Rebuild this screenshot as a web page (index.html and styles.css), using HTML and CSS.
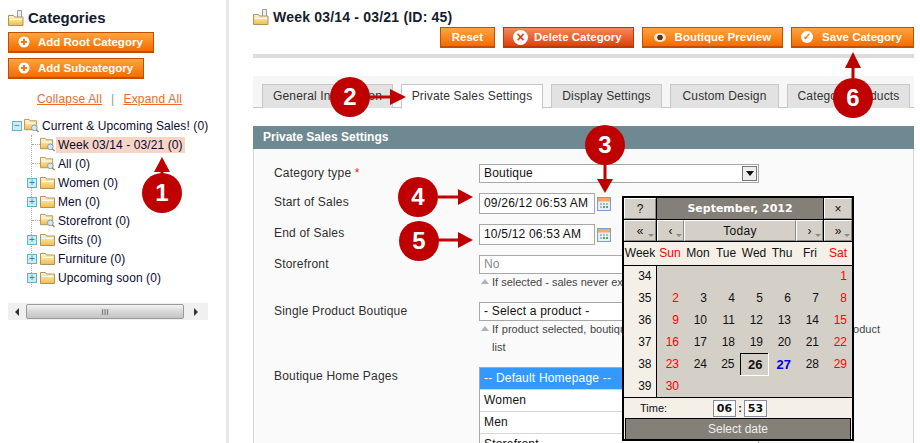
FILE: index.html
```html
<!DOCTYPE html>
<html lang="en">
<head>
  <meta charset="UTF-8" />
  <title>Manage Categories</title>
  <link rel="stylesheet" href="styles.css">
</head>
<body>
  <svg class="defs" width="0" height="0">
    <defs>
      <linearGradient id="fold" x1="0" y1="0" x2="0" y2="1">
        <stop offset="0" stop-color="#fff8d8"/>
        <stop offset="1" stop-color="#f0bd45"/>
      </linearGradient>
    </defs>
    <symbol id="folder" viewBox="0 0 15 15">
      <path d="M0.5 2.5h5l1 1.5h8v9.5h-14z" fill="url(#fold)" stroke="#b0935a"/>
      <path d="M2 6h11v1H2z" fill="#fff"/>
    </symbol>
    <symbol id="folder-search" viewBox="0 0 16 16">
      <path d="M0.5 1.5h5l1 1.5h7v9.5h-13z" fill="url(#fold)" stroke="#b0935a"/>
      <path d="M2 5h10v1H2z" fill="#fff"/>
      <circle cx="11" cy="10.5" r="3" fill="#d6e8f7" stroke="#7b9cba"/>
      <path d="M13 12.5l2.5 2.5" stroke="#b5803a" stroke-width="1.5"/>
    </symbol>
    <symbol id="head-folder" viewBox="0 0 16 16">
      <path d="M9.5 0.5h4v7h-4z" fill="#eee" stroke="#9a9a9a"/>
      <path d="M0.5 5.5h5l1 1.5h8.5v8.5H0.5z" fill="url(#fold)" stroke="#b0935a"/>
      <path d="M2 9h12v1H2z" fill="#fff"/>
    </symbol>
    <symbol id="cal" viewBox="0 0 14 14">
      <rect x="0.5" y="0.5" width="13" height="13" fill="#e6eef8" stroke="#7d9fc9"/>
      <rect x="1" y="1" width="12" height="3.5" fill="#f7a860"/>
      <path d="M3 6h2v2H3zM6 6h2v2H6zM9 6h2v2H9zM3 9h2v2H3z" fill="#a9bcd4"/>
      <path d="M6 9h2v2H6zM9 9h2v2H9z" fill="#5da84e"/>
    </symbol>
    <symbol id="add" viewBox="0 0 12 12">
      <circle cx="6" cy="6" r="5.5" fill="#fff"/>
      <path d="M6 3v6M3 6h6" stroke="#f07a10" stroke-width="2"/>
    </symbol>
  </svg>

  <div class="page">
    <aside class="side">
      <h3 class="side-title"><svg class="head-icon"><use href="#head-folder"/></svg>Categories</h3>
      <button class="btn btn-side"><svg class="btn-icon"><use href="#add"/></svg>Add Root Category</button>
      <button class="btn btn-side"><svg class="btn-icon"><use href="#add"/></svg>Add Subcategory</button>
      <p class="tree-links"><a>Collapse All</a><span class="sep">|</span><a>Expand All</a></p>

      <div class="tree">
        <div class="tree-row tree-root">
          <span class="toggle">&minus;</span>
          <svg class="folder"><use href="#folder-search"/></svg>
          <span>Current &amp; Upcoming Sales! (0)</span>
        </div>
        <ul class="tree-kids">
          <li class="tree-row leaf"><svg class="folder"><use href="#folder-search"/></svg><span class="current">Week 03/14 - 03/21 (0)</span></li>
          <li class="tree-row leaf"><svg class="folder"><use href="#folder-search"/></svg><span>All (0)</span></li>
          <li class="tree-row"><span class="toggle">+</span><svg class="folder"><use href="#folder"/></svg><span>Women (0)</span></li>
          <li class="tree-row"><span class="toggle">+</span><svg class="folder"><use href="#folder"/></svg><span>Men (0)</span></li>
          <li class="tree-row leaf"><svg class="folder"><use href="#folder-search"/></svg><span>Storefront (0)</span></li>
          <li class="tree-row"><span class="toggle">+</span><svg class="folder"><use href="#folder"/></svg><span>Gifts (0)</span></li>
          <li class="tree-row"><span class="toggle">+</span><svg class="folder"><use href="#folder"/></svg><span>Furniture (0)</span></li>
          <li class="tree-row"><span class="toggle">+</span><svg class="folder"><use href="#folder"/></svg><span>Upcoming soon (0)</span></li>
        </ul>
      </div>

      <div class="hscroll">
        <span class="arrow-left"></span>
        <span class="thumb">III</span>
        <span class="arrow-right"></span>
      </div>
    </aside>

    <main class="main">
      <h3 class="main-title"><svg class="head-icon"><use href="#head-folder"/></svg>Week 03/14 - 03/21 (ID: 45)</h3>
      <div class="actions">
        <button class="btn">Reset</button>
        <button class="btn btn-delete"><span class="ic-delete">&times;</span>Delete Category</button>
        <button class="btn"><span class="ic-eye"></span>Boutique Preview</button>
        <button class="btn btn-save"><span class="ic-check">&#10003;</span>Save Category</button>
      </div>
      <div class="rule"></div>

      <ul class="tabs">
        <li class="tab tab-general">General Information</li>
        <li class="tab tab-active">Private Sales Settings</li>
        <li class="tab tab-display">Display Settings</li>
        <li class="tab tab-design">Custom Design</li>
        <li class="tab tab-products">Category Products</li>
      </ul>

      <section class="panel">
        <h4 class="panel-head">Private Sales Settings</h4>
        <div class="form">
          <div class="row row-type">
            <label>Category type <em>*</em></label>
            <div class="field select">Boutique<span class="select-arrow"></span></div>
          </div>
          <div class="row row-date">
            <label>Start of Sales</label>
            <div class="date-wrap"><div class="field date">09/26/12 06:53 AM</div><svg class="cal-icon"><use href="#cal"/></svg></div>
          </div>
          <div class="row row-date">
            <label>End of Sales</label>
            <div class="date-wrap"><div class="field date">10/5/12 06:53 AM</div><svg class="cal-icon"><use href="#cal"/></svg></div>
          </div>
          <div class="row row-store">
            <label>Storefront</label>
            <div>
              <div class="field disabled">No</div>
              <p class="note">If selected - sales never expire</p>
            </div>
          </div>
          <div class="row row-single">
            <label>Single Product Boutique</label>
            <div>
              <div class="field select">- Select a product -</div>
              <p class="note note-wrap">If product selected, boutique will be redirected straight on to the single product list</p>
            </div>
          </div>
          <div class="row">
            <label>Boutique Home Pages</label>
            <ul class="listbox">
              <li class="picked">-- Default Homepage --</li>
              <li>Women</li>
              <li>Men</li>
              <li>Storefront</li>
            </ul>
          </div>
        </div>
      </section>
    </main>
  </div>

  <div class="calendar">
    <div class="cal-top">
      <span class="cal-btn cal-small">?</span>
      <span class="cal-month">September, 2012</span>
      <span class="cal-btn cal-close">&times;</span>
    </div>
    <div class="cal-nav">
      <span class="cal-btn cal-small drop">&laquo;</span>
      <span class="cal-btn cal-step drop">&lsaquo;</span>
      <span class="cal-btn cal-today">Today</span>
      <span class="cal-btn cal-step drop">&rsaquo;</span>
      <span class="cal-btn cal-close drop">&raquo;</span>
    </div>
    <table class="cal-days">
      <thead>
        <tr><th class="wk">Week</th><th class="we">Sun</th><th>Mon</th><th>Tue</th><th>Wed</th><th>Thu</th><th>Fri</th><th class="we">Sat</th></tr>
      </thead>
      <tbody>
        <tr><td class="wk">34</td><td></td><td></td><td></td><td></td><td></td><td></td><td class="we">1</td></tr>
        <tr><td class="wk">35</td><td class="we">2</td><td>3</td><td>4</td><td>5</td><td>6</td><td>7</td><td class="we">8</td></tr>
        <tr><td class="wk">36</td><td class="we">9</td><td>10</td><td>11</td><td>12</td><td>13</td><td>14</td><td class="we">15</td></tr>
        <tr><td class="wk">37</td><td class="we">16</td><td>17</td><td>18</td><td>19</td><td>20</td><td>21</td><td class="we">22</td></tr>
        <tr><td class="wk">38</td><td class="we">23</td><td>24</td><td>25</td><td class="sel">26</td><td class="today">27</td><td>28</td><td class="we">29</td></tr>
        <tr><td class="wk">39</td><td class="we">30</td><td></td><td></td><td></td><td></td><td></td><td></td></tr>
      </tbody>
    </table>
    <div class="cal-time">
      <span class="time-label">Time:</span>
      <span class="time-box">06</span><b>:</b><span class="time-box">53</span>
    </div>
    <div class="cal-foot">Select date</div>
  </div>

  <!-- callouts -->
  <svg class="arrows" width="920" height="443">
    <g fill="#bf0000" stroke="#bf0000" stroke-width="3">
      <path d="M162 175V165M370 97H392M605 165V182M438 197H460M438 240H460M853 78V66" fill="none"/>
      <g stroke="none">
        <path d="M162 157l8 15h-16z"/>
        <path d="M406 97l-16 8v-16z"/>
        <path d="M605 193l-8-14h16z"/>
        <path d="M473 197l-15 8v-16z"/>
        <path d="M473 240l-15 8v-16z"/>
        <path d="M853 52l8 16h-16z"/>
      </g>
    </g>
  </svg>
  <span class="badge badge-1">1</span>
  <span class="badge badge-2">2</span>
  <span class="badge badge-3">3</span>
  <span class="badge badge-4">4</span>
  <span class="badge badge-5">5</span>
  <span class="badge badge-6">6</span>
</body>
</html>
```

FILE: styles.css
```css
* {
  box-sizing: border-box;
}

html,
body {
  margin: 0;
  height: 443px;
  overflow: hidden;
}

body {
  position: relative;
  font-family: "Liberation Sans", Arial, sans-serif;
  font-size: 12px;
  color: #2f2f2f;
  background: white;
}

.defs {
  position: absolute;
}

.page {
  display: flex;
  height: 443px;
}

/* left column */
.side {
  width: 229px;
  flex: none;
  padding: 9px 0 0 8px;
  border-right: 3px solid #e8e8e8;
}

h3 {
  margin: 0;
  font-size: 14px;
  color: #14202c;
  display: flex;
  align-items: center;
}

.side-title {
  font-size: 15px;
  height: 18px;
  margin-bottom: 5px;
  line-height: 16px;
}

.head-icon {
  width: 16px;
  height: 16px;
  margin-right: 4px;
  flex: none;
}

.btn {
  display: inline-flex;
  align-items: center;
  height: 21px;
  padding: 0 11px;
  font-family: inherit;
  font-size: 11.5px;
  font-weight: bold;
  color: white;
  border: 1px solid #c24f00;
  border-width: 1px 1px 2px;
  background: linear-gradient(#ffa53f, #f36c00);
  white-space: nowrap;
}

.btn-side {
  display: flex;
  width: fit-content;
  padding: 0 10px 0 9px;
  margin-bottom: 5px;
}

.btn-icon {
  width: 12px;
  height: 12px;
  margin-right: 8px;
}

.tree-links {
  margin: 12px 0 0;
  padding-left: 29px;
  height: 16px;
  line-height: 16px;
  letter-spacing: 0.2px;
  color: #eb6a2a;
}

.tree-links a {
  text-decoration: underline;
}

.sep {
  margin: 0 9px;
  color: #7f9fb0;
}

.tree {
  width: 200px;
  margin-top: 9px;
  overflow: hidden;
  white-space: nowrap;
  color: #0a0a30;
  letter-spacing: 0.1px;
}

.tree-row {
  display: flex;
  align-items: center;
  height: 19px;
}

.tree-root {
  padding-left: 4px;
}

.toggle {
  width: 10px;
  height: 10px;
  flex: none;
  font-size: 10px;
  line-height: 8px;
  text-align: center;
  color: #2a8aa0;
  background: #c9edf5;
  border: 1px solid #5bb6cc;
}

.folder {
  width: 15px;
  height: 15px;
  flex: none;
  margin-right: 3px;
}

.tree-root .toggle {
  margin-right: 2px;
}

.tree-kids {
  list-style: none;
  margin: 0 0 0 23px;
  padding: 0;
  height: 152px;
  border-left: 1px dotted #aaa;
}

.tree-kids .toggle {
  margin: 0 3px 0 -5px;
}

.leaf::before {
  content: "";
  width: 8px;
  border-top: 1px dotted #aaa;
}

.current {
  background: #f6d5c5;
  padding: 1px 2px;
  margin-left: -2px;
}

.hscroll {
  display: flex;
  align-items: center;
  width: 200px;
  height: 17px;
  margin-top: 16px;
  background: #f0f0f0;
}

.arrow-left,
.arrow-right {
  width: 18px;
  height: 17px;
  flex: none;
  display: flex;
  align-items: center;
  justify-content: center;
}

.arrow-right {
  width: 24px;
}

.arrow-left::before {
  content: "";
  border: 4px solid transparent;
  border-right-color: #333;
  margin-left: -4px;
}

.arrow-right::before {
  content: "";
  border: 4px solid transparent;
  border-left-color: #333;
  margin-left: 4px;
}

.thumb {
  flex: 1;
  height: 15px;
  font-size: 9px;
  line-height: 14px;
  text-align: center;
  color: #666;
  border: 1px solid #9a9a9a;
  border-radius: 2px;
  background: linear-gradient(#f2f2f2, #d8d8d8 50%, #c4c4c4);
}

/* main column */
.main {
  flex: 1;
  min-width: 0;
  padding: 8px 6px 0 24px;
}

.main-title {
  height: 18px;
  letter-spacing: 0.2px;
}

.actions {
  display: flex;
  justify-content: flex-end;
  gap: 8px;
  margin-top: 1px;
}

.btn-delete {
  padding-left: 9px;
  border-color: #b83a08;
  background: linear-gradient(#f58a5a, #e0400a);
}

.btn-save {
  padding-left: 9px;
}

.ic-delete,
.ic-check,
.ic-eye {
  flex: none;
  border-radius: 50%;
  background: white;
  text-align: center;
}

.ic-delete {
  width: 15px;
  height: 15px;
  margin-right: 6px;
  line-height: 14px;
  color: #d8401a;
  font-size: 14px;
}

.ic-check {
  width: 12px;
  height: 12px;
  margin-right: 9px;
  line-height: 12px;
  color: #f07a10;
  font-size: 10px;
}

.ic-eye {
  width: 12px;
  height: 9px;
  margin-right: 9px;
  background: radial-gradient(circle, #5a3a1a 0 2.5px, #f3e6d8 3px);
}

.rule {
  height: 4px;
  margin-top: 6px;
  background: #dcdcdc;
}

.tabs {
  display: flex;
  list-style: none;
  margin: 18px 0 0;
  padding: 8px 0 0;
  height: 32px;
  background: #f6f6f6;
  border-bottom: 1px solid #c8c8c8;
}

.tab {
  height: 24px;
  line-height: 22px;
  margin-left: 8px;
  text-align: center;
  letter-spacing: 0.15px;
  color: #333;
  background: #e2e2e2;
  border: 1px solid #c8c8c8;
  border-bottom: 0;
  white-space: nowrap;
  overflow: hidden;
}

.tab-general {
  width: 131px;
  margin-left: 9px;
}

.tab-active {
  width: 142px;
  height: 25px;
  background: white;
}

.tab-display {
  width: 111px;
}

.tab-design {
  width: 109px;
}

.tab-products {
  width: 123px;
}

.panel {
  margin-top: 18px;
}

.panel-head {
  margin: 0;
  height: 23px;
  padding-left: 10px;
  font-size: 12px;
  line-height: 23px;
  color: white;
  background: #6f8992;
}

.form {
  height: 300px;
  padding: 15px 0 0 20px;
  background: #fafafa;
  border: 1px solid #d6d6d6;
  border-width: 0 1px;
}

.row {
  display: grid;
  grid-template-columns: 205px 1fr;
  letter-spacing: 0.2px;
}

.row label {
  padding-top: 2px;
}

.row label em {
  color: #e02020;
  font-style: normal;
}

.row-type {
  margin-bottom: 10px;
}

.row-date {
  margin-bottom: 10px;
}

.row-store {
  height: 47px;
}

.row-single {
  height: 65px;
}

.field {
  position: relative;
  width: 280px;
  height: 19px;
  padding-left: 4px;
  line-height: 17px;
  color: #111;
  background: white;
  border: 1px solid #a8a8a8;
}

.date-wrap {
  display: flex;
  align-items: center;
  gap: 2px;
}

.date {
  width: 116px;
  height: 21px;
  line-height: 19px;
}

.disabled {
  color: #8a8a8a;
}

.select-arrow {
  position: absolute;
  right: 1px;
  top: 1px;
  width: 15px;
  height: 15px;
  background: #eee;
  border: 1px solid #777;
}

.select-arrow::after {
  content: "";
  position: absolute;
  left: 3px;
  top: 4px;
  border: 4px solid transparent;
  border-top: 5px solid #111;
  border-bottom: 0;
}

.cal-icon {
  width: 14px;
  height: 14px;
}

.note {
  position: relative;
  margin: -1px 0 0;
  padding-left: 13px;
  font-size: 11px;
  letter-spacing: 0;
  line-height: 18px;
  white-space: nowrap;
  color: #444;
}

.note-wrap {
  width: 401px;
  white-space: normal;
  text-align: justify;
}

.note::before {
  content: "";
  position: absolute;
  left: 2px;
  top: 6px;
  border: 4px solid transparent;
  border-bottom: 5px solid #a9b5ba;
  border-top: 0;
}

.listbox {
  list-style: none;
  width: 280px;
  margin: 0;
  padding: 0;
  background: white;
  border: 1px solid #a8a8a8;
  color: #111;
}

.listbox li {
  height: 22px;
  padding-left: 4px;
  line-height: 21px;
  border-bottom: 1px solid #d6d6d6;
}

.listbox .picked {
  color: white;
  background: #3399ff;
}

/* date popup */
.calendar {
  position: absolute;
  left: 622px;
  top: 196px;
  width: 232px;
  height: 245px;
  color: #111;
  background: #f4f0e8;
  border: 2px solid black;
}

.cal-top,
.cal-nav {
  display: flex;
  height: 22px;
  background: black;
}

.cal-btn {
  position: relative;
  display: flex;
  align-items: center;
  justify-content: center;
  flex: none;
  height: 21px;
  font-size: 12px;
  background: #d4d0c8;
  border: 1px solid;
  border-color: white #888 #888 white;
}

.cal-small {
  width: 32px;
  margin-right: 1px;
}

.cal-close {
  width: 28px;
  margin-left: 1px;
}

.cal-step {
  width: 27px;
}

.cal-today {
  flex: 1;
  letter-spacing: 0.3px;
}

.drop::after {
  content: "";
  position: absolute;
  right: 1px;
  bottom: 3px;
  border: 3px solid transparent;
  border-top: 3px solid #8a8a8a;
  border-bottom: 0;
}

.cal-month {
  flex: 1;
  height: 21px;
  font-family: "DejaVu Sans", sans-serif;
  font-size: 11px;
  font-weight: bold;
  line-height: 22px;
  text-align: center;
  white-space: nowrap;
  color: white;
  background: #848078;
}

.cal-days {
  width: 228px;
  table-layout: fixed;
  border-collapse: collapse;
  background: #d4d0c8;
}

.cal-days th {
  height: 23px;
  padding: 0;
  font-weight: normal;
  text-align: center;
  background: #f4f0e8;
  border-bottom: 1px solid black;
}

.cal-days th.wk {
  width: 32px;
}

.cal-days td {
  height: 22px;
  padding: 0 5px 0 0;
  text-align: right;
}

.cal-days td.wk {
  padding-right: 4px;
  background: #f4f0e8;
  border-right: 1px solid black;
}

.cal-days .we {
  color: #ff0000;
}

.cal-days .sel {
  font-size: 13px;
  font-weight: bold;
  border: 1px solid;
  border-color: black white white black;
}

.cal-days .today {
  font-size: 13px;
  font-weight: bold;
  color: #0000e0;
}

.cal-time {
  display: flex;
  align-items: center;
  height: 21px;
  font-size: 11px;
  background: #f4f0e8;
  border-top: 1px solid black;
}

.time-label {
  width: 89px;
  padding-left: 16px;
}

.time-box {
  width: 23px;
  height: 17px;
  font-family: "DejaVu Sans", sans-serif;
  font-weight: bold;
  line-height: 15px;
  text-align: center;
  background: white;
  border: 1px solid #8a8aa0;
}

.cal-time b {
  width: 8px;
  text-align: center;
}

.cal-foot {
  height: 22px;
  line-height: 21px;
  text-align: center;
  color: #eee;
  background: #848078;
  border: 1px solid black;
  margin: 0 1px;
}

/* callouts */
.arrows {
  position: absolute;
  left: 0;
  top: 0;
}

.badge {
  position: absolute;
  width: 40px;
  height: 40px;
  border-radius: 50%;
  font-size: 24px;
  font-weight: bold;
  line-height: 40px;
  text-align: center;
  color: white;
  background: #bf0000;
}

.badge-1 { left: 142px; top: 173px; }
.badge-2 { left: 330px; top: 77px; }
.badge-3 { left: 585px; top: 125px; }
.badge-4 { left: 398px; top: 177px; }
.badge-5 { left: 399px; top: 221px; }
.badge-6 { left: 833px; top: 78px; }
```
